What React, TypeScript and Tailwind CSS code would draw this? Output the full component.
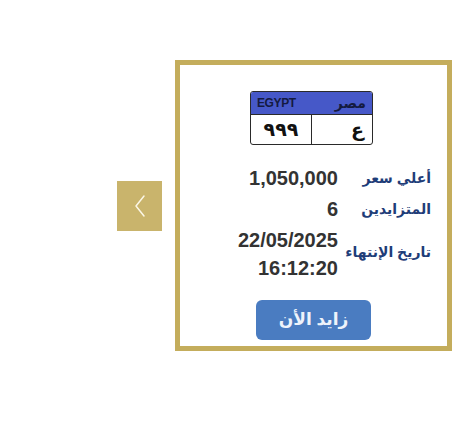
export default function App() {
  return (
    <div className="w-[467px] h-[430px] bg-white font-['Liberation_Sans','DejaVu_Sans',sans-serif]">
      <div className="flex items-center pt-[60px] pl-[117px] gap-[13px]">
        {/* Prev arrow */}
        <button className="w-[45px] h-[50px] bg-[#c9b46c] flex items-center justify-center">
          <svg width="14" height="26" viewBox="0 0 14 26" fill="none">
            <path d="M11 3 L3 13 L11 23" stroke="#fbf6e6" strokeWidth="1.5" strokeLinecap="round" strokeLinejoin="round" />
          </svg>
        </button>

        {/* Card */}
        <div className="w-[277px] h-[291px] border-[5px] border-[#c4ad5c] bg-white flex flex-col items-center pt-[26px]">
          {/* Plate */}
          <div className="w-[123px] h-[54px] border-[1.5px] border-[#2a2a2a] rounded-[3px] overflow-hidden flex flex-col ml-[-4px]">
            <div className="h-[23px] bg-[#4658c8] flex items-center justify-between px-[6px] border-b-[1.5px] border-[#2a2a2a]">
              <span className="text-[12px] font-bold text-[#141a40] tracking-[-0.4px] leading-none">EGYPT</span>
              <span dir="rtl" className="text-[14px] font-bold text-[#141a40] leading-none">مصر</span>
            </div>
            <div className="flex-1 flex">
              <div className="w-[61px] border-r-[1.5px] border-[#2a2a2a] flex items-center justify-center">
                <span className="text-[19px] font-bold text-[#111] leading-none">٩٩٩</span>
              </div>
              <div className="flex-1 flex items-center justify-end pr-[8px]">
                <span className="text-[19px] font-bold text-[#111] leading-none">ع</span>
              </div>
            </div>
          </div>

          {/* Details */}
          <div dir="rtl" className="self-stretch pr-[16px] mt-[19px] grid grid-cols-[84px_auto] gap-x-[9px] gap-y-[3px] justify-start items-center">
            <span className="text-[14px] font-bold text-[#1f3d78]">أعلي سعر</span>
            <span className="text-[20px] font-bold text-[#333] leading-[28px]">1,050,000</span>
            <span className="text-[14px] font-bold text-[#1f3d78]">المتزايدين</span>
            <span className="text-[20px] font-bold text-[#333] leading-[28px]">6</span>
            <span className="text-[14px] font-bold text-[#1f3d78] whitespace-nowrap mt-[-4px]">تاريخ الإنتهاء</span>
            <span className="text-[20px] font-bold text-[#333] leading-[28px] flex flex-col items-start">
              <span dir="ltr">22/05/2025</span>
              <span dir="ltr">16:12:20</span>
            </span>
          </div>

          {/* Bid button */}
          <button className="mt-[18px] w-[115px] h-[40px] rounded-[6px] bg-[#4a7cc1] text-[#eef3fb] text-[17px] font-semibold flex items-center justify-center">
            <span dir="rtl">زايد الأن</span>
          </button>
        </div>
      </div>
    </div>
  );
}
